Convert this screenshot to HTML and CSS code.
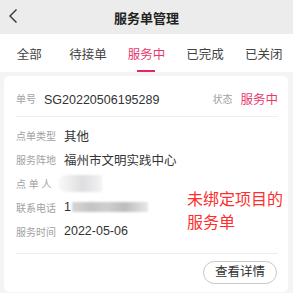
FILE: index.html
```html
<!DOCTYPE html>
<html lang="zh-CN">
<head>
    <meta charset="UTF-8">
    <meta name="viewport" content="width=device-width, initial-scale=1.0">
    <title>服务单管理</title>
    <link rel="stylesheet" href="styles.css">
</head>
<body>

    <!-- Top bar -->
    <div class="topbar">
        <svg class="back" width="12" height="16" viewBox="0 0 12 16">
            <polyline points="8.5,1.5 2,8 8.5,14.5" fill="none" stroke="#333" stroke-width="1.4"/>
        </svg>
        <div class="title">服务单管理</div>
    </div>

    <!-- Tabs -->
    <div class="tabs">
        <a class="tab">全部</a>
        <a class="tab">待接单</a>
        <a class="tab active">服务中</a>
        <a class="tab">已完成</a>
        <a class="tab">已关闭</a>
    </div>

    <div class="list">
        <div class="card">
            <div class="card-head">
                <span class="label">单号</span>
                <span class="order-no">SG20220506195289</span>
                <span class="spacer"></span>
                <span class="label">状态</span>
                <span class="status">服务中</span>
            </div>

            <div class="card-body">
                <div class="row">
                    <span class="label">点单类型</span>
                    <span class="value">其他</span>
                </div>
                <div class="row">
                    <span class="label">服务阵地</span>
                    <span class="value">福州市文明实践中心</span>
                </div>
                <div class="row">
                    <span class="label">点 单 人</span>
                    <span class="blur-name"></span>
                </div>
                <div class="row">
                    <span class="label">联系电话</span>
                    <span class="value">1</span>
                    <span class="blur-phone"></span>
                </div>
                <div class="row">
                    <span class="label">服务时间</span>
                    <span class="value">2022-05-06</span>
                </div>
            </div>

            <div class="card-foot">
                <a class="btn">查看详情</a>
            </div>

            <!-- note drawn over the card -->
            <div class="note">未绑定项目的<br>服务单</div>
        </div>
    </div>

</body>
</html>
```

FILE: styles.css
```css
body, html {
    margin: 0;
    padding: 0;
    height: 100%;
    background-color: #f4f4f4;
    font-family: "Liberation Sans", "Noto Sans CJK SC", sans-serif;
    overflow: hidden;
}

/* Top bar */
.topbar {
    height: 34px;
    background-color: #ececec;
    display: flex;
    align-items: center;
    justify-content: center;
    position: relative;
}

.back {
    position: absolute;
    left: 8px;
    top: 8px;
}

.title {
    font-size: 13px;
    font-weight: bold;
    color: #222;
}

/* Tabs */
.tabs {
    height: 38px;
    background-color: #fff;
    display: flex;
}

.tab {
    flex: 1;
    display: flex;
    align-items: center;
    justify-content: center;
    font-size: 12.5px;
    color: #444;
    position: relative;
}

.tab.active {
    color: #e8396f;
}

.tab.active::after {
    content: "";
    position: absolute;
    bottom: 0;
    left: 50%;
    width: 18px;
    height: 2px;
    margin-left: -9px;
    background-color: #e3285f;
}

/* Card list */
.list {
    padding: 4px 5px 0 4px;
}

.card {
    background-color: #fff;
    border-radius: 5px;
    padding: 0 10px 0 12px;
    position: relative;
}

.card-head {
    display: flex;
    align-items: center;
    padding: 12px 0 4px;
    line-height: 24px;
    border-bottom: 1px solid #eee;
}

.spacer {
    flex: 1;
}

.label {
    font-size: 10px;
    color: #a2a2a2;
}

.order-no {
    font-size: 12.5px;
    color: #333;
    margin-left: 8px;
}

.status {
    font-size: 12.5px;
    color: #e8396f;
    margin-left: 8px;
}

.card-body {
    padding: 6px 0 10px;
    border-bottom: 1px solid #eee;
}

.row {
    display: flex;
    align-items: center;
    height: 24px;
}

.row .label {
    width: 48px;
}

.value {
    font-size: 12.5px;
    color: #333;
}

/* blurred private data */
.blur-name {
    width: 44px;
    height: 17px;
    margin-left: -6px;
    border-radius: 8px 0 0 8px;
    background: linear-gradient(90deg, #fafafa 0%, #ececec 30%, #dedede 55%, #e9e9ec 80%, #f4f4f6 100%);
    filter: blur(1px);
}

.blur-phone {
    width: 76px;
    height: 10px;
    margin-left: 1px;
    background: linear-gradient(90deg, #d6d6d6 0%, #c4c4c4 25%, #cfcfcf 45%, #bdbdbd 70%, #e8e8e8 100%);
    filter: blur(0.8px);
}

.card-foot {
    display: flex;
    justify-content: flex-end;
    padding: 7px 1px 8px 0;
}

.btn {
    height: 21px;
    line-height: 21px;
    padding: 0 11px;
    border: 1px solid #c8c8c8;
    border-radius: 12px;
    font-size: 12.5px;
    color: #333;
}

/* red annotation */
.note {
    position: absolute;
    left: 183px;
    top: 112px;
    font-size: 16px;
    line-height: 23px;
    color: #ff2d2d;
}
```
